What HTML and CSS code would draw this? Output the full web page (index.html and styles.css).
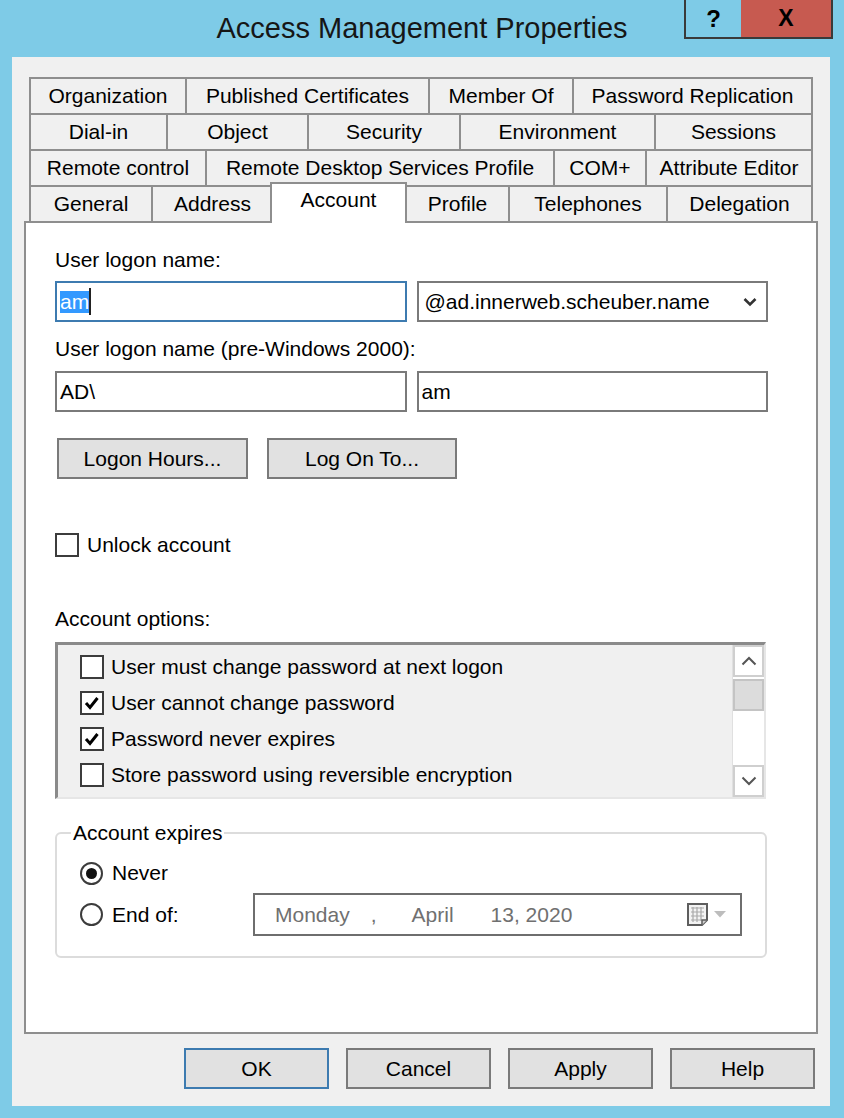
FILE: index.html
```html
<!DOCTYPE html>
<html lang="en">
<head>
<meta charset="utf-8">
<title>Access Management Properties</title>
<link rel="stylesheet" href="styles.css">
</head>
<body>
<div class="window">
  <header class="titlebar">
    <div class="tb-spacer"></div>
    <h1 class="title">Access Management Properties</h1>
    <div class="caption">
      <span class="cap-btn help">?</span>
      <span class="cap-btn close">X</span>
    </div>
  </header>

  <div class="client">
    <div class="tabs">
      <div class="tab-row r1">
        <div class="tab">Organization</div>
        <div class="tab">Published Certificates</div>
        <div class="tab">Member Of</div>
        <div class="tab">Password Replication</div>
      </div>
      <div class="tab-row r2">
        <div class="tab">Dial-in</div>
        <div class="tab">Object</div>
        <div class="tab">Security</div>
        <div class="tab">Environment</div>
        <div class="tab">Sessions</div>
      </div>
      <div class="tab-row r3">
        <div class="tab">Remote control</div>
        <div class="tab">Remote Desktop Services Profile</div>
        <div class="tab">COM+</div>
        <div class="tab">Attribute Editor</div>
      </div>
      <div class="tab-row r4">
        <div class="tab">General</div>
        <div class="tab">Address</div>
        <div class="tab selected">Account</div>
        <div class="tab">Profile</div>
        <div class="tab">Telephones</div>
        <div class="tab">Delegation</div>
      </div>
    </div>

    <div class="panel">
      <div class="lbl lbl-first">User logon name:</div>
      <div class="field-row">
        <div class="textbox focused"><span class="sel">am</span><span class="caret"></span></div>
        <div class="combo">
          <span>@ad.innerweb.scheuber.name</span>
          <svg class="chev" width="14" height="10" viewBox="0 0 14 10"><polyline points="1.5,2 7,7.5 12.5,2" fill="none" stroke="#333" stroke-width="2.6"/></svg>
        </div>
      </div>

      <div class="lbl lbl-second">User logon name (pre-Windows 2000):</div>
      <div class="field-row row-second">
        <div class="textbox">AD\</div>
        <div class="textbox">am</div>
      </div>

      <div class="btn-row">
        <button class="btn btn-logon">Logon Hours...</button>
        <button class="btn btn-logonto">Log On To...</button>
      </div>

      <div class="check unlock"><span class="cb"></span><span>Unlock account</span></div>

      <div class="lbl lbl-options">Account options:</div>
      <div class="listbox">
        <div class="list-items">
          <div class="check item"><span class="cb"></span><span>User must change password at next logon</span></div>
          <div class="check item"><span class="cb"><svg width="20" height="20" viewBox="0 0 20 20"><polyline points="4,10 8,14.5 15.5,5" fill="none" stroke="#000" stroke-width="3"/></svg></span><span>User cannot change password</span></div>
          <div class="check item"><span class="cb"><svg width="20" height="20" viewBox="0 0 20 20"><polyline points="4,10 8,14.5 15.5,5" fill="none" stroke="#000" stroke-width="3"/></svg></span><span>Password never expires</span></div>
          <div class="check item"><span class="cb"></span><span>Store password using reversible encryption</span></div>
        </div>
        <div class="scrollbar">
          <div class="sb-btn"><svg width="16" height="10" viewBox="0 0 16 10"><polyline points="1.5,8.5 8,2 14.5,8.5" fill="none" stroke="#555" stroke-width="2"/></svg></div>
          <div class="sb-thumb"></div>
          <div class="sb-track"></div>
          <div class="sb-btn"><svg width="16" height="10" viewBox="0 0 16 10"><polyline points="1.5,1.5 8,8 14.5,1.5" fill="none" stroke="#555" stroke-width="2"/></svg></div>
        </div>
      </div>

      <fieldset class="group">
        <legend>Account expires</legend>
        <div class="group-body">
          <div class="radio-row never"><span class="radio on"></span><span>Never</span></div>
          <div class="radio-row endof">
            <div class="radio-label"><span class="radio"></span><span>End of:</span></div>
            <div class="datepicker">
              <span class="d-day">Monday</span>
              <span class="d-comma">,</span>
              <span class="d-month">April</span>
              <span class="d-date">13, 2020</span>
              <svg class="cal" width="22" height="23" viewBox="0 0 22 23">
                <path d="M1 1 H20 V17 L15 22 H1 Z" fill="#f3f3f3" stroke="#5e5e5e" stroke-width="2"/>
                <path d="M4 5 H17 M4 9 H17 M4 13 H17 M4 17 H14 M6 4 V19 M10 4 V19 M14 4 V18" stroke="#a9a9a9" stroke-width="1.2" fill="none"/>
                <path d="M15 22 V17 H20" fill="#cfcfcf" stroke="#5e5e5e" stroke-width="1.5"/>
              </svg>
              <svg class="dd" width="12" height="7" viewBox="0 0 12 7"><polygon points="0,0 12,0 6,6.5" fill="#bdbdbd"/></svg>
            </div>
          </div>
        </div>
      </fieldset>
    </div>

    <div class="dialog-buttons">
      <button class="btn dlg default">OK</button>
      <button class="btn dlg">Cancel</button>
      <button class="btn dlg">Apply</button>
      <button class="btn dlg">Help</button>
    </div>
  </div>
</div>
</body>
</html>
```

FILE: styles.css
```css
* { box-sizing: border-box; }

html, body {
  margin: 0;
  padding: 0;
}

body {
  width: 844px;
  height: 1118px;
  overflow: hidden;
  background: #7ecbe7;
  font-family: "Liberation Sans", Arial, sans-serif;
  font-size: 21px;
  color: #000;
}

.window {
  display: flex;
  flex-direction: column;
  height: 1118px;
}

/* ---------- title bar ---------- */
.titlebar {
  height: 57px;
  flex: 0 0 57px;
  display: grid;
  grid-template-columns: 1fr auto 1fr;
  align-items: start;
}

.title {
  margin: 0;
  padding-top: 11px;
  font-size: 29px;
  line-height: 34px;
  font-weight: normal;
  color: #161616;
  white-space: nowrap;
}

.caption {
  justify-self: end;
  margin-right: 11px;
  display: flex;
  height: 39px;
  border: 2px solid #3a3a3a;
  border-top: 0;
}

.cap-btn {
  display: flex;
  align-items: center;
  justify-content: center;
  font-weight: bold;
  color: #000;
}

.help {
  width: 55px;
  background: #7ecbe7;
  font-size: 24px;
}

.close {
  width: 90px;
  background: #c75a50;
  font-size: 23px;
}

/* ---------- client area ---------- */
.client {
  flex: 1;
  margin: 0 14px 12px 12px;
  background: #f0f0f0;
  display: flex;
  flex-direction: column;
  padding: 20px 12px 17px 12px;
}

.tabs {
  margin: 0 5px;
  display: flex;
  flex-direction: column;
}

.tab-row {
  display: grid;
  height: 36px;
}

.r1 { grid-template-columns: 156fr 243fr 144fr 241fr; }
.r2 { grid-template-columns: 137fr 141fr 152fr 195fr 159fr; }
.r3 { grid-template-columns: 176fr 348fr 92fr 168fr; }
.r4 { grid-template-columns: 122fr 121fr 133fr 103fr 158fr 147fr; }

.tab {
  background: #f0f0f0;
  border-top: 2px solid #8e8e8e;
  border-left: 2px solid #8e8e8e;
  text-align: center;
  line-height: 33px;
  white-space: nowrap;
}

.tab:last-child {
  border-right: 2px solid #8e8e8e;
}

.tab.selected {
  background: #fff;
  margin: -3px -2px -2px -2px;
  border-right: 2px solid #8e8e8e;
  border-left: 2px solid #8e8e8e;
  z-index: 1;
  line-height: 32px;
}

/* ---------- panel ---------- */
.panel {
  flex: 1;
  background: #fff;
  border: 2px solid #8e8e8e;
  padding: 25px 48px 0 29px;
  display: flex;
  flex-direction: column;
}

.lbl {
  line-height: 24px;
}

.lbl-second { margin-top: 15px; }
.lbl-options { margin-top: 50px; }

.field-row {
  display: grid;
  grid-template-columns: 1fr 1fr;
  column-gap: 10px;
  margin-top: 9px;
}

.row-second { margin-top: 10px; }

.textbox,
.combo {
  height: 41px;
  border: 2px solid #7a7a7a;
  background: #fff;
  line-height: 37px;
  padding-left: 3px;
  white-space: nowrap;
  display: flex;
  align-items: center;
}

.textbox.focused {
  border-color: #3d7bb0;
}

.sel {
  background: #3399ff;
  color: #fff;
  line-height: 22px;
}

.caret {
  display: inline-block;
  width: 2px;
  height: 27px;
  background: #222;
}

.combo {
  padding-left: 6px;
  padding-right: 9px;
}

.combo .chev {
  margin-left: auto;
}

.btn {
  font-family: inherit;
  font-size: 21px;
  color: #000;
  background: #e1e1e1;
  border: 2px solid #7a7a7a;
  height: 41px;
  padding: 0;
  margin: 0;
  border-radius: 0;
}

.btn-row {
  display: flex;
  gap: 19px;
  margin-top: 26px;
  padding-left: 2px;
}

.btn-logon { width: 191px; }
.btn-logonto { width: 190px; }

/* ---------- checkboxes ---------- */
.check {
  display: flex;
  align-items: center;
  white-space: nowrap;
}

.cb {
  width: 24px;
  height: 24px;
  flex: 0 0 24px;
  border: 2px solid #3c3c3c;
  background: #fff;
  display: flex;
  align-items: center;
  justify-content: center;
}

.unlock {
  margin-top: 53px;
  height: 25px;
  gap: 8px;
}

/* ---------- list box ---------- */
.listbox {
  margin-top: 11px;
  margin-right: 2px;
  height: 157px;
  background: #f0f0f0;
  border-top: 3px solid #8a8a8a;
  border-left: 3px solid #8a8a8a;
  border-right: 2px solid #e6e6e6;
  border-bottom: 2px solid #e6e6e6;
  display: flex;
}

.list-items {
  flex: 1;
  padding: 4px 0 0 22px;
}

.item {
  height: 36px;
  gap: 7px;
}

.scrollbar {
  width: 32px;
  display: flex;
  flex-direction: column;
  background: #fff;
  border-left: 1px solid #e0e0e0;
}

.sb-btn {
  height: 32px;
  border: 2px solid #cfcfcf;
  background: #fff;
  display: flex;
  align-items: center;
  justify-content: center;
}

.sb-thumb {
  height: 32px;
  margin-top: 2px;
  background: #dcdcdc;
  border: 2px solid #c4c4c4;
}

.sb-track {
  flex: 1;
  background: #fff;
}

/* ---------- group box ---------- */
.group {
  margin: 23px 1px 0 0;
  padding: 0;
  border: 2px solid #dcdcdc;
  border-radius: 6px;
  min-width: 0;
}

.group legend {
  margin-left: 14px;
  padding: 0 2px;
  line-height: 22px;
}

.group-body {
  padding: 14px 23px 20px 23px;
  display: flex;
  flex-direction: column;
  gap: 5px;
}

.radio-row {
  display: flex;
  align-items: center;
  white-space: nowrap;
}

.never {
  height: 30px;
  gap: 9px;
}

.endof {
  display: grid;
  grid-template-columns: 173px 1fr;
  align-items: center;
}

.radio-label {
  display: flex;
  align-items: center;
  gap: 9px;
}

.radio {
  width: 23px;
  height: 23px;
  flex: 0 0 23px;
  border: 2px solid #3c3c3c;
  border-radius: 50%;
  background: #fff;
  display: flex;
  align-items: center;
  justify-content: center;
}

.radio.on::after {
  content: "";
  width: 11px;
  height: 11px;
  border-radius: 50%;
  background: #111;
}

.datepicker {
  height: 43px;
  border: 2px solid #6e6e6e;
  background: #fff;
  color: #707070;
  display: flex;
  align-items: center;
  padding: 0 14px 0 20px;
  white-space: nowrap;
}

.d-comma { margin-left: 21px; }
.d-month { margin-left: 35px; }
.d-date { margin-left: 37px; }

.cal { margin-left: auto; }
.dd { margin-left: 5px; }

/* ---------- dialog buttons ---------- */
.dialog-buttons {
  display: flex;
  justify-content: flex-end;
  gap: 17px;
  margin-top: 14px;
  padding-right: 3px;
}

.btn.dlg {
  width: 145px;
}

.btn.default {
  border-color: #3d7bb0;
}
```
